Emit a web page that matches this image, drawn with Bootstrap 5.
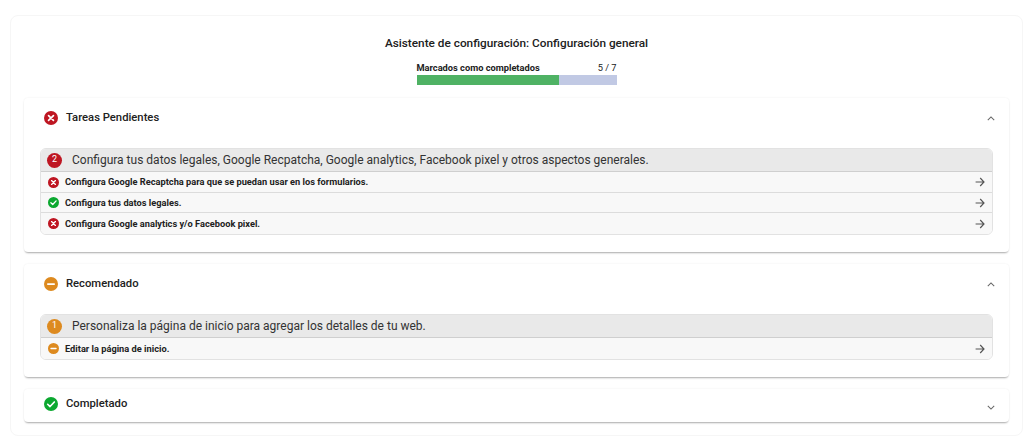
<!DOCTYPE html>
<html lang="es">
  <head>
    <meta charset="UTF-8" />
    <title>Asistente de configuración</title>
    <link
      href="https://cdn.jsdelivr.net/npm/bootstrap@5.3.0/dist/css/bootstrap.min.css"
      rel="stylesheet"
    />
    <style>
      body {
        font-family: Roboto, "Liberation Sans", sans-serif;
        background: #fff;
        color: #212121;
        height: 443px;
        overflow: hidden;
      }
      .wizard-shell {
        margin: 15px 1px 0 10px;
        height: 421px;
        border: 1px solid #f6f6f6;
        border-radius: 8px;
        padding: 0 13px;
      }
      .wizard-title {
        font-size: 11.8px;
        font-weight: 500;
        line-height: 16px;
        margin: 0;
        padding-top: 19px;
        text-align: center;
      }
      .wizard-progress {
        width: 200px;
        margin: 10px auto 13px;
      }
      .wizard-progress-label {
        font-size: 9.25px;
        line-height: 14px;
      }
      .wizard-progress-bar {
        height: 10px;
        border-radius: 0;
        background: #c1c9e4;
      }
      .wizard-progress-bar .progress-bar {
        background: #4fb264;
      }
      .step-panel {
        border: 0;
        border-radius: 4px;
        box-shadow: 0 2px 2px -1px rgba(0, 0, 0, 0.32), 0 0 2px rgba(0, 0, 0, 0.08);
        margin-bottom: 12px;
      }
      .step-panel-head {
        height: 40px;
        padding: 0 14.5px 0 20px;
        font-size: 11.25px;
        font-weight: 500;
      }
      .step-panel-head svg.state-icon {
        margin-right: 8px;
      }
      .step-panel-head-closed {
        height: 33px;
        padding-bottom: 3px;
      }
      .chevron-closed {
        margin-top: 6px;
      }
      .step-panel-body {
        padding: 10px 16px 17.5px;
      }
      .step-group {
        border: 1px solid #e2e2e2;
        border-radius: 6px;
        overflow: hidden;
      }
      .step-group-head {
        height: 23px;
        background: #e9e9e9;
        border-bottom: 1px solid #cfcfcf;
        padding-left: 6px;
        font-size: 12px;
        color: #333;
      }
      .step-count {
        width: 15px;
        height: 15px;
        border-radius: 50%;
        color: #fff;
        font-size: 9px;
        margin-right: 10px;
      }
      .step-row {
        height: 20.5px;
        background: #f8f8f8;
        border-bottom: 1px solid #dcdcdc;
        padding: 1px 7px 0;
        font-size: 9.25px;
        font-weight: 700;
      }
      .step-row:last-child {
        border-bottom: 0;
      }
      .step-row .state-icon {
        margin-right: 6px;
      }
      .tone-red {
        background: #be1622;
      }
      .tone-orange {
        background: #dd8a1f;
      }
    </style>
  </head>
  <body>
    <svg width="0" height="0" class="d-block">
      <defs>
        <symbol id="ico-error" viewBox="0 0 16 16">
          <circle cx="8" cy="8" r="8" fill="#be1622" />
          <path d="M5.2 5.2l5.6 5.6M10.8 5.2l-5.6 5.6" stroke="#fff" stroke-width="1.9" stroke-linecap="round" />
        </symbol>
        <symbol id="ico-warn" viewBox="0 0 16 16">
          <circle cx="8" cy="8" r="8" fill="#dd8a1f" />
          <path d="M4.4 8h7.2" stroke="#fff" stroke-width="2" stroke-linecap="round" />
        </symbol>
        <symbol id="ico-ok" viewBox="0 0 16 16">
          <circle cx="8" cy="8" r="8" fill="#0ca830" />
          <path d="M4.2 8.3l2.7 2.6 4.9-5.2" fill="none" stroke="#fff" stroke-width="1.9" stroke-linecap="round" stroke-linejoin="round" />
        </symbol>
        <symbol id="ico-arrow" viewBox="0 0 10 10">
          <path d="M.6 5h8.2M5.2 1L9 5 5.2 9" fill="none" stroke="#555" stroke-width="1.15" />
        </symbol>
        <symbol id="ico-up" viewBox="0 0 10 6">
          <path d="M1 5l4-4 4 4" fill="none" stroke="#666" stroke-width="1.3" />
        </symbol>
        <symbol id="ico-down" viewBox="0 0 10 6">
          <path d="M1 1l4 4 4-4" fill="none" stroke="#666" stroke-width="1.3" />
        </symbol>
      </defs>
    </svg>
    <div class="wizard-shell">
      <h1 class="wizard-title">Asistente de configuración: Configuración general</h1>
      <div class="wizard-progress">
        <div class="wizard-progress-label d-flex justify-content-between">
          <span class="fw-bold">Marcados como completados</span><span>5 / 7</span>
        </div>
        <div class="progress wizard-progress-bar">
          <div class="progress-bar" style="width: 71.4%"></div>
        </div>
      </div>

      <div class="card step-panel">
        <div class="step-panel-head d-flex align-items-center">
          <svg class="state-icon" width="14" height="14"><use href="#ico-error" /></svg>
          <span class="flex-grow-1">Tareas Pendientes</span>
          <svg width="8" height="5"><use href="#ico-up" /></svg>
        </div>
        <div class="step-panel-body">
          <div class="step-group">
            <div class="step-group-head d-flex align-items-center">
              <span class="step-count tone-red d-flex align-items-center justify-content-center">2</span>
              Configura tus datos legales, Google Recpatcha, Google analytics, Facebook pixel y otros aspectos generales.
            </div>
            <div class="step-row d-flex align-items-center">
              <svg class="state-icon" width="11" height="11"><use href="#ico-error" /></svg>
              <span class="flex-grow-1">Configura Google Recaptcha para que se puedan usar en los formularios.</span>
              <svg width="10" height="10"><use href="#ico-arrow" /></svg>
            </div>
            <div class="step-row d-flex align-items-center">
              <svg class="state-icon" width="11" height="11"><use href="#ico-ok" /></svg>
              <span class="flex-grow-1">Configura tus datos legales.</span>
              <svg width="10" height="10"><use href="#ico-arrow" /></svg>
            </div>
            <div class="step-row d-flex align-items-center">
              <svg class="state-icon" width="11" height="11"><use href="#ico-error" /></svg>
              <span class="flex-grow-1">Configura Google analytics y/o Facebook pixel.</span>
              <svg width="10" height="10"><use href="#ico-arrow" /></svg>
            </div>
          </div>
        </div>
      </div>

      <div class="card step-panel">
        <div class="step-panel-head d-flex align-items-center">
          <svg class="state-icon" width="14" height="14"><use href="#ico-warn" /></svg>
          <span class="flex-grow-1">Recomendado</span>
          <svg width="8" height="5"><use href="#ico-up" /></svg>
        </div>
        <div class="step-panel-body">
          <div class="step-group">
            <div class="step-group-head d-flex align-items-center">
              <span class="step-count tone-orange d-flex align-items-center justify-content-center">1</span>
              Personaliza la página de inicio para agregar los detalles de tu web.
            </div>
            <div class="step-row d-flex align-items-center">
              <svg class="state-icon" width="11" height="11"><use href="#ico-warn" /></svg>
              <span class="flex-grow-1">Editar la página de inicio.</span>
              <svg width="10" height="10"><use href="#ico-arrow" /></svg>
            </div>
          </div>
        </div>
      </div>

      <div class="card step-panel">
        <div class="step-panel-head step-panel-head-closed d-flex align-items-center">
          <svg class="state-icon" width="14" height="14"><use href="#ico-ok" /></svg>
          <span class="flex-grow-1">Completado</span>
          <svg class="chevron-closed" width="8" height="5"><use href="#ico-down" /></svg>
        </div>
      </div>
    </div>
    <script src="https://cdn.jsdelivr.net/npm/bootstrap@5.3.0/dist/js/bootstrap.bundle.min.js"></script>
  </body>
</html>
